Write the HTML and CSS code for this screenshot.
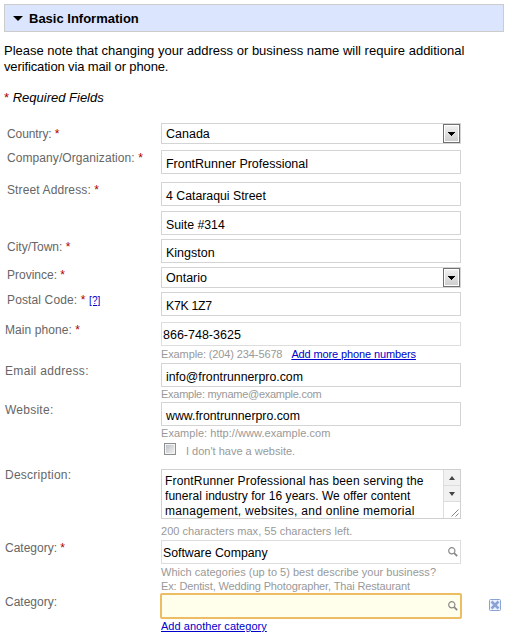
FILE: index.html
```
<!DOCTYPE html>
<html lang="en">
<head>
<meta charset="utf-8">
<title>Basic Information</title>
<link rel="stylesheet" href="styles.css">
</head>
<body>
<main class="page">
  <h1 class="section-head"><svg class="caret" width="10" height="5" viewBox="0 0 10 5"><path d="M0 0h10L5 5z"/></svg><span>Basic Information</span></h1>
  <p class="note">Please note that changing your address or business name will require additional<br><span class="note-end">verification via mail or phone.</span></p>
  <p class="required"><b class="star">*</b> <i>Required Fields</i></p>

  <div class="form">
    <div class="row country">
      <div class="label">Country: <b class="star">*</b></div>
      <div class="field select"><span>Canada</span><i class="drop"><svg width="7" height="4" viewBox="0 0 7 4"><path d="M0 0h7v1H6v1H5v1H4v1H3V3H2V2H1V1H0z"/></svg></i></div>
    </div>
    <div class="row company">
      <div class="label">Company/Organization: <b class="star">*</b></div>
      <div class="field"><span>FrontRunner Professional</span></div>
    </div>
    <div class="row street">
      <div class="label">Street Address: <b class="star">*</b></div>
      <div class="field"><span>4 Cataraqui Street</span></div>
    </div>
    <div class="row suite">
      <div class="label"></div>
      <div class="field"><span>Suite #314</span></div>
    </div>
    <div class="row city">
      <div class="label">City/Town: <b class="star">*</b></div>
      <div class="field"><span>Kingston</span></div>
    </div>
    <div class="row province">
      <div class="label">Province: <b class="star">*</b></div>
      <div class="field select"><span>Ontario</span><i class="drop"><svg width="7" height="4" viewBox="0 0 7 4"><path d="M0 0h7v1H6v1H5v1H4v1H3V3H2V2H1V1H0z"/></svg></i></div>
    </div>
    <div class="row postal">
      <div class="label">Postal Code: <b class="star">*</b> <a class="help" href="#">[?]</a></div>
      <div class="field"><span>K7K 1Z7</span></div>
    </div>
    <div class="row outer phone">
      <div class="label">Main phone: <b class="star">*</b></div>
      <div>
        <div class="field tight"><span>866-748-3625</span></div>
        <div class="hint"><span class="ex-phone">Example: (204) 234-5678</span><a class="more" href="#">Add more phone numbers</a></div>
      </div>
    </div>
    <div class="row outer email">
      <div class="label">Email address:</div>
      <div>
        <div class="field"><span>info@frontrunnerpro.com</span></div>
        <div class="hint">Example: myname@example.com</div>
      </div>
    </div>
    <div class="row outer website">
      <div class="label">Website:</div>
      <div>
        <div class="field"><span>www.frontrunnerpro.com</span></div>
        <div class="hint">Example: http://www.example.com</div>
        <div class="check"><i class="box"></i><span>I don't have a website.</span></div>
      </div>
    </div>
    <div class="row outer description">
      <div class="label">Description:</div>
      <div>
        <div class="area">
          <div class="area-text"><span class="l1">FrontRunner Professional has been serving the</span><br><span class="l2">funeral industry for 16 years. We offer content</span><br><span class="l3">management, websites, and online memorial</span></div>
          <div class="scroll">
            <i class="scroll-btn"><svg width="6" height="4" viewBox="0 0 6 4"><path d="M3 0l3 4H0z"/></svg></i>
            <i class="scroll-btn"><svg width="6" height="4" viewBox="0 0 6 4"><path d="M3 4L0 0h6z"/></svg></i>
            <svg class="grip" width="8" height="8" viewBox="0 0 8 8"><path d="M.5 7.5l7-7M4.500 7.500l3-3"/></svg>
          </div>
        </div>
        <div class="hint">200 characters max, 55 characters left.</div>
      </div>
    </div>
    <div class="row outer category">
      <div class="label">Category: <b class="star">*</b></div>
      <div>
        <div class="field tight"><span>Software Company</span><svg class="search" width="10" height="10" viewBox="0 0 10 10"><circle cx="3.800" cy="3.800" r="3.100"/><path d="M6.200 6.200L9.200 9.200"/></svg></div>
        <div class="hint lines"><span class="h1">Which categories (up to 5) best describe your business?</span><br><span class="h2">Ex: Dentist, Wedding Photographer, Thai Restaurant</span></div>
      </div>
    </div>
    <div class="row outer category-new">
      <div class="label">Category:</div>
      <div>
        <div class="field active"><svg class="search" width="10" height="10" viewBox="0 0 10 10"><circle cx="3.800" cy="3.800" r="3.100"/><path d="M6.200 6.200L9.200 9.200"/></svg></div>
        <a class="another" href="#">Add another category</a>
      </div>
      <svg class="remove" width="12" height="12" viewBox="0 0 12 12"><rect x=".5" y=".5" width="11" height="11" rx="1"/><path d="M2.500 2.500l7 7M9.500 2.500l-7 7"/></svg>
    </div>
  </div>
</main>
</body>
</html>
```
FILE: styles.css
```
* { box-sizing: border-box; }
body {
  margin: 0;
  background: #fff;
  color: #000;
  font: 13px/16px "Liberation Sans", Arial, sans-serif;
}
.page { width: 506px; height: 643px; padding: 4px 0 0 4px; overflow: hidden; white-space: nowrap; }
.section-head {
  display: flex;
  align-items: center;
  width: 500px;
  height: 28px;
  margin: 0;
  padding-left: 8px;
  border: 1px solid #ccc;
  background: #dbe6fe;
  font-size: 13px;
}
.section-head span { padding-top: 1px; }
.caret { margin-right: 6px; }
.note { margin: 11px 0 0; }
.note-end { letter-spacing: -.13px; }
.required { margin: 15px 0 0; }
.star { color: #a00; font-weight: normal; }
.form { margin-top: 17px; }
.row { display: grid; grid-template-columns: 154px 300px 1fr; padding-left: 3px; }
.row.outer { grid-template-columns: 156px 300px 1fr; padding-left: 1px; }
.label { font-size: 12px; line-height: 16px; color: #666; }
.country { height: 27px; }
.country .label { padding-top: 3px; letter-spacing: -.1px; }
.company { height: 32px; }
.company .label { letter-spacing: .08px; }
.street .label { letter-spacing: .12px; }
.street { height: 29px; }
.suite, .city { height: 28px; }
.province { height: 25px; }
.postal { height: 30px; }
.postal .label { letter-spacing: .13px; }
.phone { height: 41px; }
.phone .label { letter-spacing: .08px; }
.email { height: 39px; }
.email .label { letter-spacing: .32px; }
.email .hint { letter-spacing: -.27px; }
.website { height: 67px; }
.website .label { letter-spacing: .25px; }
.website .hint { letter-spacing: .04px; }
.email .hint, .website .hint { margin-top: -1px; }
.description { height: 71px; }
.description .label { margin-top: -2px; letter-spacing: .25px; }
.category { height: 53px; }
.category-new .label { padding-top: 1px; }
.help { font-size: 10px; color: #00c; }
.field {
  display: flex;
  align-items: center;
  height: 24px;
  padding: 3px 0 0 4px;
  border: 1px solid #d4d4d4;
  background: #fff;
  font-size: 12.3px;
}
.company .field { font-size: 12.5px; letter-spacing: -.02px; }
.country .field, .province .field, .city .field, .phone .field { font-size: 12.5px; }
.postal .field { letter-spacing: -.3px; }
.field.tight { padding: 2px 0 0 1px; border-color: #ddd; }
.field.select { justify-content: space-between; height: 21px; padding: 0 0 0 4px; }
.drop {
  display: flex;
  align-items: center;
  justify-content: center;
  width: 17px;
  height: 19px;
  border: 1px solid #707070;
  background: linear-gradient(#f2f2f2, #ccc);
  box-shadow: inset 0 0 0 1px #fff;
}
.hint { font-size: 11px; line-height: 16px; color: #999; }
.phone .hint { letter-spacing: -.12px; }
.more { margin-left: 9px; }
a { color: #00c; }
.check { display: flex; align-items: center; height: 16px; margin-top: 1px; padding: 1px 0 0 3px; font-size: 11px; color: #999; }
.box {
  width: 12px;
  height: 12px;
  margin: -3px 10px 0 0;
  border: 1px solid #8e8f8f;
  background: linear-gradient(135deg, #b8bcc2, #f5f5f5);
  box-shadow: inset 0 0 0 1px #f4f4f4;
}
.area { display: flex; justify-content: space-between; height: 50px; border: 1px solid #d0d0d0; }
.area-text { padding: 4px 0 0 3px; font-size: 12px; line-height: 15px; }
.l1 { letter-spacing: .16px; }
.l2 { letter-spacing: .05px; }
.l3 { letter-spacing: .28px; }
.scroll { display: flex; flex-direction: column; width: 17px; border-left: 1px solid #ddd; }
.scroll-btn {
  display: flex;
  align-items: center;
  justify-content: center;
  height: 16px;
  border-bottom: 1px solid #ddd;
  background: #f1f1f1;
}
.scroll-btn svg { fill: #444; }
.grip { margin: 7px 0 0 7px; fill: none; stroke: #666; stroke-width: .8; }
.description .hint { padding-top: 4px; letter-spacing: .03px; }
.hint.lines { padding-top: 1px; line-height: 14px; }
.h1 { letter-spacing: .02px; }
.h2 { letter-spacing: -.14px; }
.search { margin: 0 2px 3px auto; fill: none; stroke: #888; stroke-width: 1.2; }
.search path { stroke-width: 1.8; }
.field.active {
  height: 26px;
  width: 302px;
  margin-left: -1px;
  padding: 2px 0 0 0;
  border: 2px solid #ecbd63;
  border-radius: 2px;
  background: #ffffec;
}
.another { display: block; font-size: 11px; line-height: 14px; letter-spacing: .03px; }
.remove { margin: 6px 0 0 28px; fill: #edf3ff; stroke: #8ba3d4; }
.remove path { stroke-width: 2.6; }
```
